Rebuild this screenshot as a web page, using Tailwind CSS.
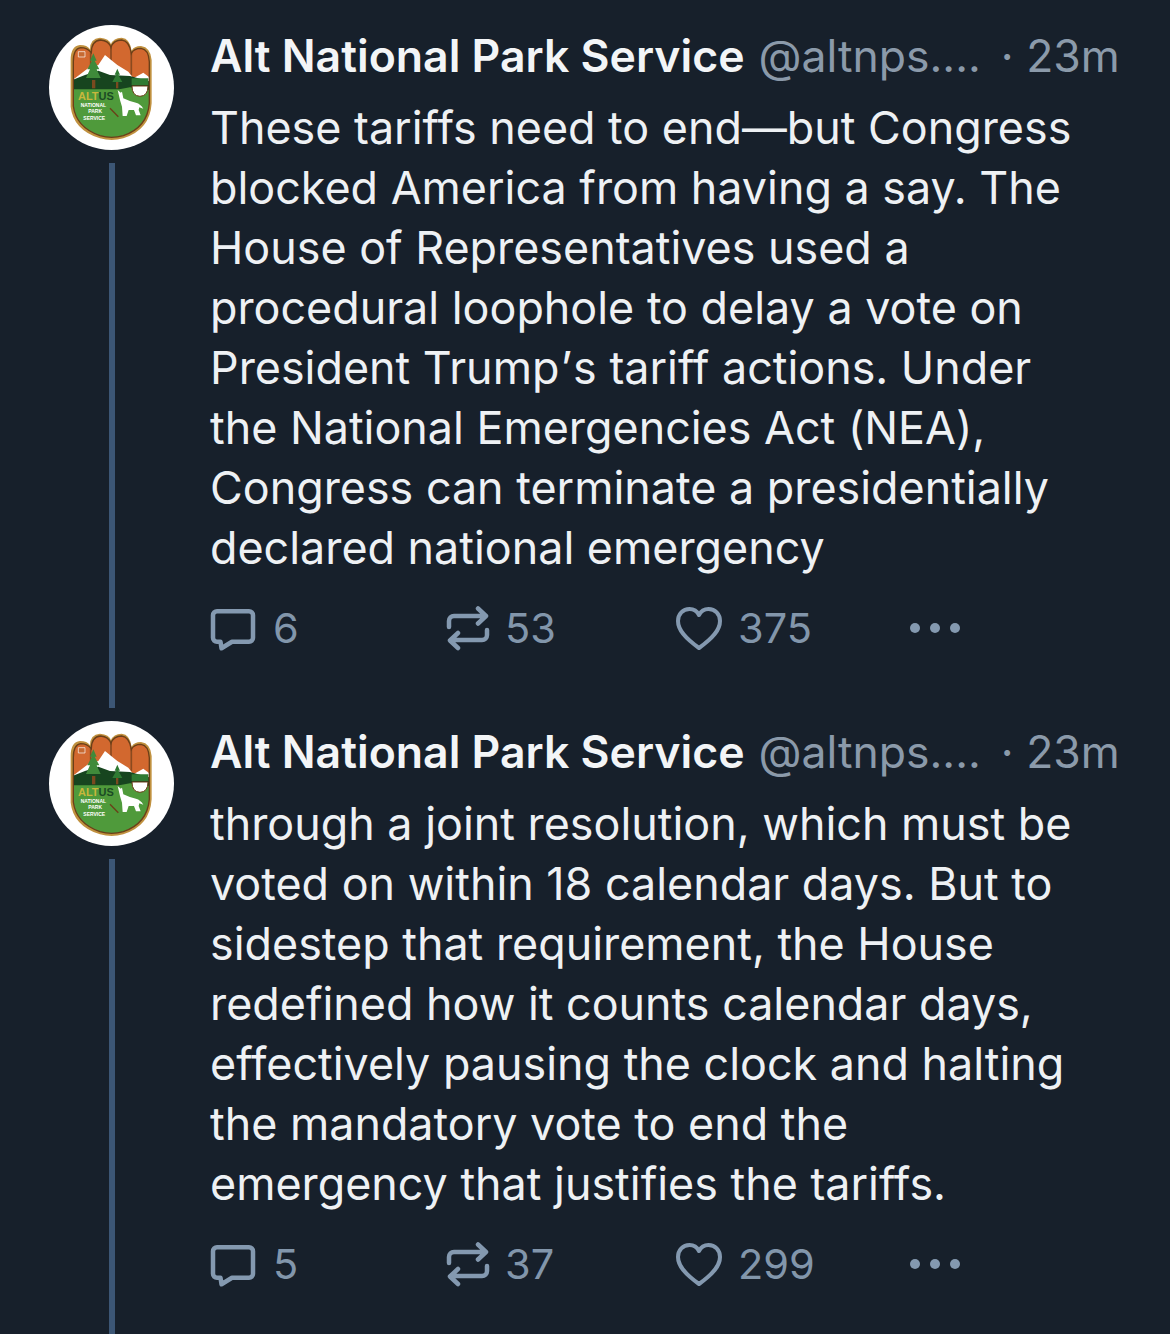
<!DOCTYPE html>
<html lang="en">
<head>
<meta charset="utf-8">
<title>Alt National Park Service thread</title>
<script src="https://cdn.jsdelivr.net/npm/@tailwindcss/browser@4"></script>
</head>
<body class="bg-[#17202b] font-['Inter',sans-serif] overflow-hidden [font-variant-ligatures:none]">
<svg class="absolute w-0 h-0">
  <symbol id="icon-reply" viewBox="0 0 46 46">
    <path d="M7 6.250h32a4 4 0 0 1 4 4v22.500a4 4 0 0 1-4 4H22l-10.500 6.500-1-6.500H7a4 4 0 0 1-4-4V10.250a4 4 0 0 1 4-4z" fill="none" stroke="#8499b0" stroke-width="4.500" stroke-linejoin="round" stroke-linecap="round"/>
  </symbol>
  <symbol id="icon-repost" viewBox="0 0 46 46">
    <path d="M4 22v-6a5 5 0 0 1 5-5h32M33 3.500l8 7.500-8 7.500M42 25v5a5 5 0 0 1-5 5H6M13 28l-8 7.500 8 7.500" fill="none" stroke="#8499b0" stroke-width="4.500" stroke-linecap="round" stroke-linejoin="round"/>
  </symbol>
  <symbol id="icon-heart" viewBox="0 0 46 46">
    <path d="M23 43C9 33 2 25 2 16 2 9 7 4 13.500 4c4 0 7.500 2 9.500 6 2-4 5.500-6 9.500-6C39 4 44 9 44 16c0 9-7 17-21 27z" fill="none" stroke="#8499b0" stroke-width="4" stroke-linejoin="round"/>
  </symbol>
</svg>

<main class="pt-[12px] pl-[49px]">
  <!-- first post -->
  <article class="flex h-[696px] pt-[13px]">
    <div class="flex flex-col items-center w-[125px] shrink-0 mr-[36px]">
      <svg class="w-[125px] h-[125px] shrink-0" viewBox="0 0 125 125">
        <clipPath id="hand-a"><path d="M130 155Q130 116 152 113Q172 113 184 128Q184 92 212 90Q236 92 243 112Q250 90 275 90Q298 92 304 130Q312 115 333 115Q356 118 358 155L358 280Q352 352 280 377Q245 387 210 377Q138 352 130 288Z"/></clipPath>
        <circle cx="62.5" cy="62.5" r="62.5" fill="#fff"/>
        <g transform="translate(-19 -15) scale(.3333)">
          <path d="M122 150Q122 108 150 105Q172 105 180 118Q180 85 210 83Q238 85 243 103Q250 83 275 83Q300 85 305 122Q312 108 333 108Q362 112 365 150L365 280Q360 360 280 385Q245 395 210 385Q130 360 122 290Z" fill="#c0913f"/>
          <g clip-path="url(#hand-a)">
            <rect x="120" y="80" width="250" height="320" fill="#d2682f"/>
            <path d="M182 110v90M243 105v80M304 125v70" stroke="#8a4a1f" stroke-width="5"/>
            <path d="M128 210L180 170 205 165 225 135 262 165 295 185 310 205 340 188 362 205V240H128Z" fill="#fff"/>
            <path d="M128 210L165 195 205 182 240 195 300 198 362 215V245H128Z" fill="#17451f"/>
            <path d="M120 238H268L300 232 362 240V400H120Z" fill="#4f9a3b"/>
            <path d="M305 205h50v20h-50z" fill="#2f7a33"/>
          </g>
          <path d="M130 155Q130 116 152 113Q172 113 184 128Q184 92 212 90Q236 92 243 112Q250 90 275 90Q298 92 304 130Q312 115 333 115Q356 118 358 155L358 280Q352 352 280 377Q245 387 210 377Q138 352 130 288Z" fill="none" stroke="#6b3f18" stroke-width="4"/>
          <path d="M306 228h48q0 30-24 31q-24-1-24-31z" fill="#fff" stroke="#6b3f18" stroke-width="3"/>
          <path d="M186 235h10v-25h-10z" fill="#7a4a1f"/>
          <path d="M190 130l-10 22h6l-14 26h8l-12 26h44l-12-26h8l-14-26h6z" fill="#3f8a3a"/>
          <path d="M258 235h7v-20h-7z" fill="#7a4a1f"/>
          <path d="M262 176l-8 18h5l-12 22h30l-12-22h5z" fill="#2f7a33"/>
          <path d="M145 125h20v16h-20z" fill="#c66a32" stroke="#fff" stroke-width="2"/>
          <path d="M240 295L265 320" stroke="#6b3f18" stroke-width="4"/>
          <path d="M263 240L272 248 276 245 280 265Q300 275 318 278 332 282 340 296L328 292 326 300 332 316H318L312 300H296L290 318H278L276 290 270 270Z" fill="#fff"/>
          <g font-family="'Liberation Sans',sans-serif" font-weight="700">
            <text x="144" y="270" font-size="33" fill="#c9b73c">ALT<tspan fill="#1a4a24">US</tspan></text>
            <text x="152" y="290" font-size="15" fill="#fff">NATIONAL</text>
            <text x="175" y="310" font-size="15" fill="#fff">PARK</text>
            <text x="160" y="330" font-size="15" fill="#fff">SERVICE</text>
          </g>
        </g>
      </svg>
      <div class="w-[6px] flex-1 mt-[13px] bg-[#3c5675]"></div>
    </div>
    <div class="w-[940px]">
      <div class="flex items-baseline text-[44.5px] leading-[60px] text-[#8b9aaa] whitespace-nowrap mt-[1px]">
        <span class="font-semibold text-[#f3f5f7] text-[44.6px]">Alt National Park Service</span>
        <span class="ml-[14px]">@altnps....</span>
        <span class="ml-[20px]">· 23m</span>
      </div>
      <p class="text-[44.85px] leading-[60px] text-[#eef1f4] mt-[12px]">These tariffs need to end—but Congress<br>blocked America from having a say. The<br>House of Representatives used a<br>procedural loophole to delay a vote on<br>President Trump<span class="mx-[1px]">’</span>s tariff actions. Under<br>the National Emergencies Act (NEA),<br>Congress can terminate a presidentially<br>declared national emergency</p>
      <div class="flex items-center text-[41.5px] leading-[60px] text-[#8296ab] mt-[20px]">
        <div class="flex items-center w-[235px]">
          <svg class="w-[46px] h-[46px]"><use href="#icon-reply"/></svg>
          <span class="ml-[17px]">6</span>
        </div>
        <div class="flex items-center w-[231px]">
          <svg class="w-[46px] h-[46px]"><use href="#icon-repost"/></svg>
          <span class="ml-[14px]">53</span>
        </div>
        <div class="flex items-center w-[234px]">
          <svg class="w-[46px] h-[46px]"><use href="#icon-heart"/></svg>
          <span class="ml-[16px]">375</span>
        </div>
        <div class="flex gap-[10px]">
          <span class="w-[10px] h-[10px] rounded-full bg-[#8499b0]"></span>
          <span class="w-[10px] h-[10px] rounded-full bg-[#8499b0]"></span>
          <span class="w-[10px] h-[10px] rounded-full bg-[#8499b0]"></span>
        </div>
      </div>
    </div>
  </article>

  <!-- second post -->
  <article class="flex h-[696px] pt-[13px]">
    <div class="flex flex-col items-center w-[125px] shrink-0 mr-[36px]">
      <svg class="w-[125px] h-[125px] shrink-0" viewBox="0 0 125 125">
        <clipPath id="hand-b"><path d="M130 155Q130 116 152 113Q172 113 184 128Q184 92 212 90Q236 92 243 112Q250 90 275 90Q298 92 304 130Q312 115 333 115Q356 118 358 155L358 280Q352 352 280 377Q245 387 210 377Q138 352 130 288Z"/></clipPath>
        <circle cx="62.5" cy="62.5" r="62.5" fill="#fff"/>
        <g transform="translate(-19 -15) scale(.3333)">
          <path d="M122 150Q122 108 150 105Q172 105 180 118Q180 85 210 83Q238 85 243 103Q250 83 275 83Q300 85 305 122Q312 108 333 108Q362 112 365 150L365 280Q360 360 280 385Q245 395 210 385Q130 360 122 290Z" fill="#c0913f"/>
          <g clip-path="url(#hand-b)">
            <rect x="120" y="80" width="250" height="320" fill="#d2682f"/>
            <path d="M182 110v90M243 105v80M304 125v70" stroke="#8a4a1f" stroke-width="5"/>
            <path d="M128 210L180 170 205 165 225 135 262 165 295 185 310 205 340 188 362 205V240H128Z" fill="#fff"/>
            <path d="M128 210L165 195 205 182 240 195 300 198 362 215V245H128Z" fill="#17451f"/>
            <path d="M120 238H268L300 232 362 240V400H120Z" fill="#4f9a3b"/>
            <path d="M305 205h50v20h-50z" fill="#2f7a33"/>
          </g>
          <path d="M130 155Q130 116 152 113Q172 113 184 128Q184 92 212 90Q236 92 243 112Q250 90 275 90Q298 92 304 130Q312 115 333 115Q356 118 358 155L358 280Q352 352 280 377Q245 387 210 377Q138 352 130 288Z" fill="none" stroke="#6b3f18" stroke-width="4"/>
          <path d="M306 228h48q0 30-24 31q-24-1-24-31z" fill="#fff" stroke="#6b3f18" stroke-width="3"/>
          <path d="M186 235h10v-25h-10z" fill="#7a4a1f"/>
          <path d="M190 130l-10 22h6l-14 26h8l-12 26h44l-12-26h8l-14-26h6z" fill="#3f8a3a"/>
          <path d="M258 235h7v-20h-7z" fill="#7a4a1f"/>
          <path d="M262 176l-8 18h5l-12 22h30l-12-22h5z" fill="#2f7a33"/>
          <path d="M145 125h20v16h-20z" fill="#c66a32" stroke="#fff" stroke-width="2"/>
          <path d="M240 295L265 320" stroke="#6b3f18" stroke-width="4"/>
          <path d="M263 240L272 248 276 245 280 265Q300 275 318 278 332 282 340 296L328 292 326 300 332 316H318L312 300H296L290 318H278L276 290 270 270Z" fill="#fff"/>
          <g font-family="'Liberation Sans',sans-serif" font-weight="700">
            <text x="144" y="270" font-size="33" fill="#c9b73c">ALT<tspan fill="#1a4a24">US</tspan></text>
            <text x="152" y="290" font-size="15" fill="#fff">NATIONAL</text>
            <text x="175" y="310" font-size="15" fill="#fff">PARK</text>
            <text x="160" y="330" font-size="15" fill="#fff">SERVICE</text>
          </g>
        </g>
      </svg>
      <div class="w-[6px] flex-1 mt-[13px] bg-[#3c5675]"></div>
    </div>
    <div class="w-[940px]">
      <div class="flex items-baseline text-[44.5px] leading-[60px] text-[#8b9aaa] whitespace-nowrap mt-[1px]">
        <span class="font-semibold text-[#f3f5f7] text-[44.6px]">Alt National Park Service</span>
        <span class="ml-[14px]">@altnps....</span>
        <span class="ml-[20px]">· 23m</span>
      </div>
      <p class="text-[44.85px] leading-[60px] text-[#eef1f4] mt-[12px]">through a joint resolution, which must be<br>voted on within 18 calendar days. But to<br>sidestep that requirement, the House<br>redefined how it counts calendar days,<br>effectively pausing the clock and halting<br>the mandatory vote to end the<br>emergency that justifies the tariffs.</p>
      <div class="flex items-center text-[41.5px] leading-[60px] text-[#8296ab] mt-[20px]">
        <div class="flex items-center w-[235px]">
          <svg class="w-[46px] h-[46px]"><use href="#icon-reply"/></svg>
          <span class="ml-[17px]">5</span>
        </div>
        <div class="flex items-center w-[231px]">
          <svg class="w-[46px] h-[46px]"><use href="#icon-repost"/></svg>
          <span class="ml-[14px]">37</span>
        </div>
        <div class="flex items-center w-[234px]">
          <svg class="w-[46px] h-[46px]"><use href="#icon-heart"/></svg>
          <span class="ml-[16px]">299</span>
        </div>
        <div class="flex gap-[10px]">
          <span class="w-[10px] h-[10px] rounded-full bg-[#8499b0]"></span>
          <span class="w-[10px] h-[10px] rounded-full bg-[#8499b0]"></span>
          <span class="w-[10px] h-[10px] rounded-full bg-[#8499b0]"></span>
        </div>
      </div>
    </div>
  </article>
</main>
</body>
</html>
